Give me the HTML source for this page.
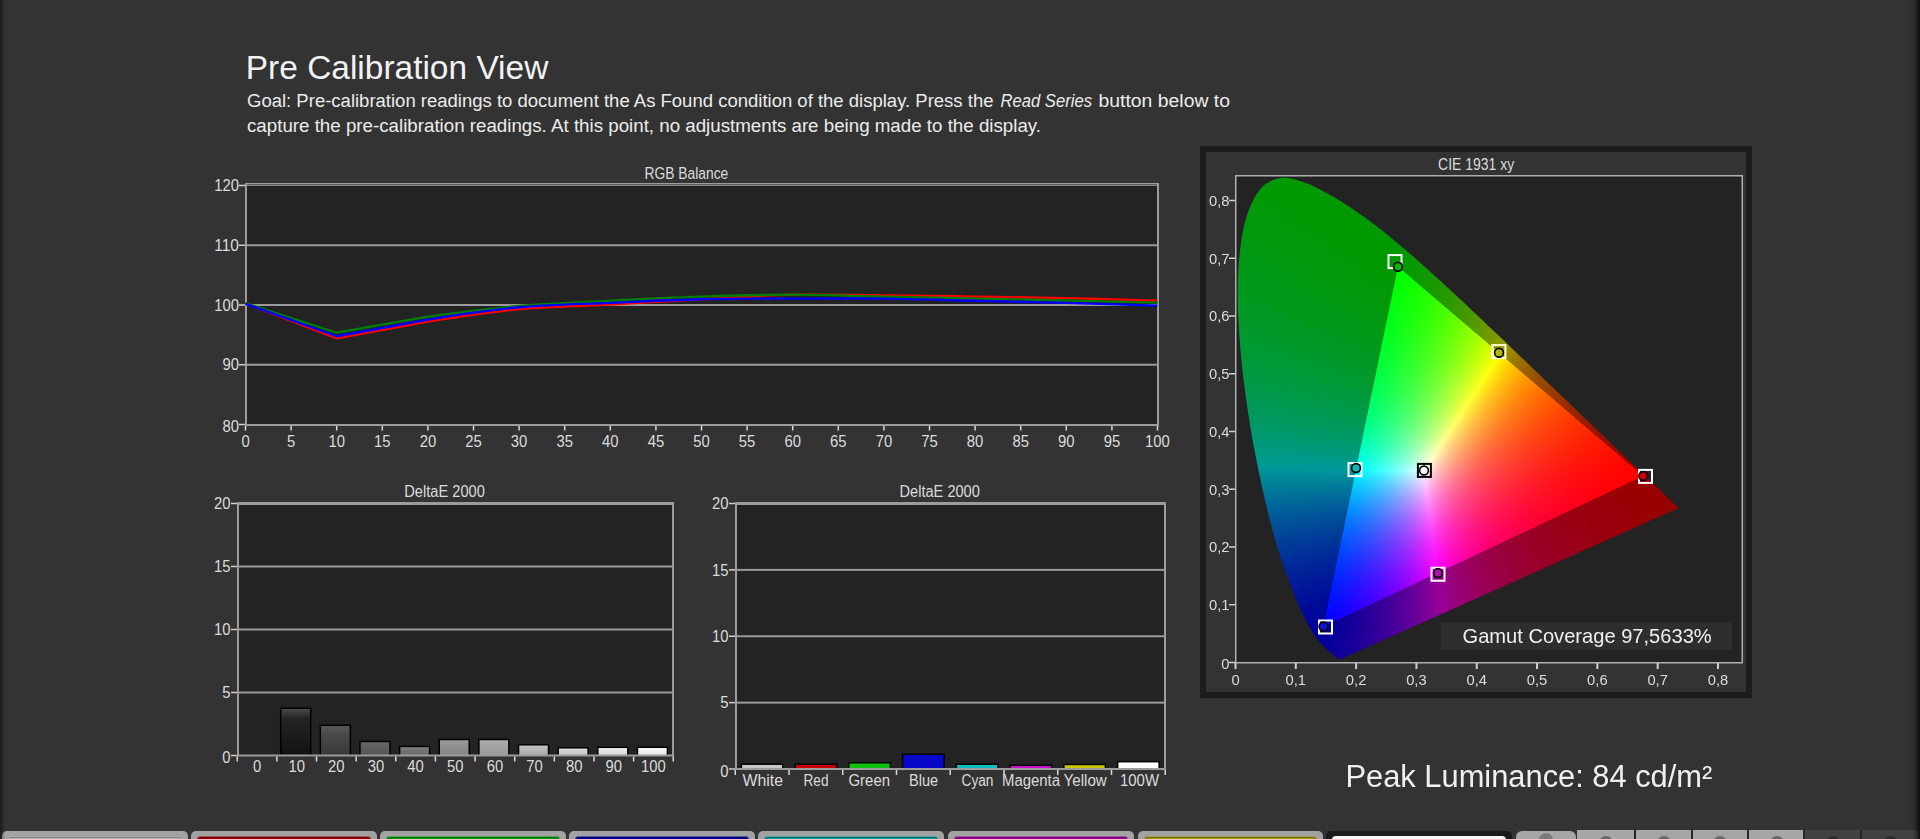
<!DOCTYPE html>
<html><head><meta charset="utf-8">
<style>
html,body{margin:0;padding:0;}
body{width:1920px;height:839px;overflow:hidden;background:#333333;position:relative;font-family:"Liberation Sans", sans-serif;}
#cie{position:absolute;left:1236px;top:176px;width:506px;height:486px;}
svg{position:absolute;left:0;top:0;}
</style></head><body>
<svg id="s" width="1920" height="839" viewBox="0 0 1920 839" font-family='"Liberation Sans", sans-serif'>
<defs>
<linearGradient id="edgeL" x1="0" x2="1" y1="0" y2="0"><stop offset="0" stop-color="#1c1c1c"/><stop offset="1" stop-color="#333333"/></linearGradient>
<linearGradient id="edgeR" x1="0" x2="1" y1="0" y2="0"><stop offset="0" stop-color="#333333"/><stop offset="0.45" stop-color="#2a2a2a"/><stop offset="1" stop-color="#0e0e0e"/></linearGradient>
</defs>
<text x="245.8" y="79" font-size="33.4" fill="#f2f2f2" textLength="302.5" lengthAdjust="spacingAndGlyphs">Pre Calibration View</text>
<text x="247" y="107.2" font-size="18.8" fill="#ececec" textLength="746.5" lengthAdjust="spacingAndGlyphs">Goal: Pre-calibration readings to document the As Found condition of the display. Press the</text>
<text x="1000.5" y="107.2" font-size="18.8" fill="#ececec" textLength="91.5" lengthAdjust="spacingAndGlyphs" font-style="italic">Read Series</text>
<text x="1098.5" y="107.2" font-size="18.8" fill="#ececec" textLength="131.5" lengthAdjust="spacingAndGlyphs">button below to</text>
<text x="247" y="132" font-size="18.8" fill="#ececec" textLength="794" lengthAdjust="spacingAndGlyphs">capture the pre-calibration readings. At this point, no adjustments are being made to the display.</text>
<rect x="245" y="183" width="914" height="243" fill="#232323"/>
<rect x="245" y="244.25" width="914" height="2" fill="#9a9a9a"/>
<rect x="245" y="304" width="914" height="2" fill="#9a9a9a"/>
<rect x="245" y="363.75" width="914" height="2" fill="#9a9a9a"/>
<rect x="245" y="183" width="914" height="3" fill="#9c9c9c"/>
<rect x="245" y="184" width="914" height="1" fill="#5c5c5c"/>
<rect x="245" y="185" width="914" height="1" fill="#8c8c8c"/>
<rect x="247" y="186" width="910" height="1" fill="#1c1c1c"/>
<rect x="245" y="424" width="914" height="2" fill="#9c9c9c"/>
<rect x="245" y="183" width="2" height="243" fill="#9c9c9c"/>
<rect x="1157" y="183" width="2" height="243" fill="#9c9c9c"/>
<rect x="239" y="184.75" width="6" height="1.5" fill="#cfcfcf"/>
<text x="214.25" y="191.15" font-size="16" fill="#dcdcdc" textLength="24.75" lengthAdjust="spacingAndGlyphs">120</text>
<rect x="239" y="244.5" width="6" height="1.5" fill="#cfcfcf"/>
<text x="214.25" y="250.9" font-size="16" fill="#dcdcdc" textLength="24.75" lengthAdjust="spacingAndGlyphs">110</text>
<rect x="239" y="304.25" width="6" height="1.5" fill="#cfcfcf"/>
<text x="214.25" y="310.65" font-size="16" fill="#dcdcdc" textLength="24.75" lengthAdjust="spacingAndGlyphs">100</text>
<rect x="239" y="364" width="6" height="1.5" fill="#cfcfcf"/>
<text x="222.5" y="370.4" font-size="16" fill="#dcdcdc" textLength="16.5" lengthAdjust="spacingAndGlyphs">90</text>
<rect x="239" y="423.75" width="6" height="1.5" fill="#cfcfcf"/>
<text x="222.5" y="432.15" font-size="16" fill="#dcdcdc" textLength="16.5" lengthAdjust="spacingAndGlyphs">80</text>
<rect x="244.75" y="426" width="1.5" height="4.5" fill="#d8d8d8"/>
<text x="241.38" y="447" font-size="16" fill="#dcdcdc" textLength="8.25" lengthAdjust="spacingAndGlyphs">0</text>
<rect x="290.35" y="426" width="1.5" height="4.5" fill="#d8d8d8"/>
<text x="286.98" y="447" font-size="16" fill="#dcdcdc" textLength="8.25" lengthAdjust="spacingAndGlyphs">5</text>
<rect x="335.95" y="426" width="1.5" height="4.5" fill="#d8d8d8"/>
<text x="328.45" y="447" font-size="16" fill="#dcdcdc" textLength="16.5" lengthAdjust="spacingAndGlyphs">10</text>
<rect x="381.55" y="426" width="1.5" height="4.5" fill="#d8d8d8"/>
<text x="374.05" y="447" font-size="16" fill="#dcdcdc" textLength="16.5" lengthAdjust="spacingAndGlyphs">15</text>
<rect x="427.15" y="426" width="1.5" height="4.5" fill="#d8d8d8"/>
<text x="419.65" y="447" font-size="16" fill="#dcdcdc" textLength="16.5" lengthAdjust="spacingAndGlyphs">20</text>
<rect x="472.75" y="426" width="1.5" height="4.5" fill="#d8d8d8"/>
<text x="465.25" y="447" font-size="16" fill="#dcdcdc" textLength="16.5" lengthAdjust="spacingAndGlyphs">25</text>
<rect x="518.35" y="426" width="1.5" height="4.5" fill="#d8d8d8"/>
<text x="510.85" y="447" font-size="16" fill="#dcdcdc" textLength="16.5" lengthAdjust="spacingAndGlyphs">30</text>
<rect x="563.95" y="426" width="1.5" height="4.5" fill="#d8d8d8"/>
<text x="556.45" y="447" font-size="16" fill="#dcdcdc" textLength="16.5" lengthAdjust="spacingAndGlyphs">35</text>
<rect x="609.55" y="426" width="1.5" height="4.5" fill="#d8d8d8"/>
<text x="602.05" y="447" font-size="16" fill="#dcdcdc" textLength="16.5" lengthAdjust="spacingAndGlyphs">40</text>
<rect x="655.15" y="426" width="1.5" height="4.5" fill="#d8d8d8"/>
<text x="647.65" y="447" font-size="16" fill="#dcdcdc" textLength="16.5" lengthAdjust="spacingAndGlyphs">45</text>
<rect x="700.75" y="426" width="1.5" height="4.5" fill="#d8d8d8"/>
<text x="693.25" y="447" font-size="16" fill="#dcdcdc" textLength="16.5" lengthAdjust="spacingAndGlyphs">50</text>
<rect x="746.35" y="426" width="1.5" height="4.5" fill="#d8d8d8"/>
<text x="738.85" y="447" font-size="16" fill="#dcdcdc" textLength="16.5" lengthAdjust="spacingAndGlyphs">55</text>
<rect x="791.95" y="426" width="1.5" height="4.5" fill="#d8d8d8"/>
<text x="784.45" y="447" font-size="16" fill="#dcdcdc" textLength="16.5" lengthAdjust="spacingAndGlyphs">60</text>
<rect x="837.55" y="426" width="1.5" height="4.5" fill="#d8d8d8"/>
<text x="830.05" y="447" font-size="16" fill="#dcdcdc" textLength="16.5" lengthAdjust="spacingAndGlyphs">65</text>
<rect x="883.15" y="426" width="1.5" height="4.5" fill="#d8d8d8"/>
<text x="875.65" y="447" font-size="16" fill="#dcdcdc" textLength="16.5" lengthAdjust="spacingAndGlyphs">70</text>
<rect x="928.75" y="426" width="1.5" height="4.5" fill="#d8d8d8"/>
<text x="921.25" y="447" font-size="16" fill="#dcdcdc" textLength="16.5" lengthAdjust="spacingAndGlyphs">75</text>
<rect x="974.35" y="426" width="1.5" height="4.5" fill="#d8d8d8"/>
<text x="966.85" y="447" font-size="16" fill="#dcdcdc" textLength="16.5" lengthAdjust="spacingAndGlyphs">80</text>
<rect x="1019.95" y="426" width="1.5" height="4.5" fill="#d8d8d8"/>
<text x="1012.45" y="447" font-size="16" fill="#dcdcdc" textLength="16.5" lengthAdjust="spacingAndGlyphs">85</text>
<rect x="1065.55" y="426" width="1.5" height="4.5" fill="#d8d8d8"/>
<text x="1058.05" y="447" font-size="16" fill="#dcdcdc" textLength="16.5" lengthAdjust="spacingAndGlyphs">90</text>
<rect x="1111.15" y="426" width="1.5" height="4.5" fill="#d8d8d8"/>
<text x="1103.65" y="447" font-size="16" fill="#dcdcdc" textLength="16.5" lengthAdjust="spacingAndGlyphs">95</text>
<rect x="1156.75" y="426" width="1.5" height="4.5" fill="#d8d8d8"/>
<text x="1145.12" y="447" font-size="16" fill="#dcdcdc" textLength="24.75" lengthAdjust="spacingAndGlyphs">100</text>
<text x="644.6" y="179" font-size="16" fill="#dcdcdc" textLength="83.7" lengthAdjust="spacingAndGlyphs">RGB Balance</text>
<g fill="none" stroke-width="2.3" stroke-linejoin="round">
<path d="M245.5,303.51 L336.7,338.46 L427.9,321.73 C458.3,316.85 488.7,312.02 519.1,309.18 C549.5,306.34 579.9,306.35 610.3,304.7 C640.7,303.05 671.1,300.93 701.5,299.26 C731.9,297.6 762.3,295.38 792.7,294.72 C823.1,294.07 853.5,295 883.9,295.32 C914.3,295.64 944.7,296.17 975.1,296.63 C1005.5,297.1 1035.9,297.46 1066.3,298.13 C1096.7,298.8 1142.3,300.22 1157.5,300.64" stroke="#ff0000"/>
<path d="M245.5,303.21 L336.7,332.72 L427.9,316.65 C458.3,312.2 488.7,308.68 519.1,306.02 C549.5,303.35 579.9,302.21 610.3,300.64 C640.7,299.06 671.1,297.56 701.5,296.58 C731.9,295.59 762.3,294.72 792.7,294.72 C823.1,294.72 853.5,295.94 883.9,296.58 C914.3,297.21 944.7,297.89 975.1,298.55 C1005.5,299.2 1035.9,299.84 1066.3,300.52 C1096.7,301.2 1142.3,302.26 1157.5,302.61" stroke="#008000"/>
<path d="M245.5,303.8 L336.7,336.25 L427.9,319.52 C458.3,314.69 488.7,310.05 519.1,307.27 C549.5,304.49 579.9,304.18 610.3,302.85 C640.7,301.51 671.1,299.96 701.5,299.26 C731.9,298.57 762.3,298.77 792.7,298.67 C823.1,298.57 853.5,298.32 883.9,298.67 C914.3,299.02 944.7,300.04 975.1,300.76 C1005.5,301.47 1035.9,302.16 1066.3,302.97 C1096.7,303.78 1142.3,305.16 1157.5,305.6" stroke="#0000ff"/>
</g>
<defs>
<linearGradient id="g10" x1="0" x2="0" y1="0" y2="1"><stop offset="0" stop-color="#4a4a4a"/><stop offset="0.2" stop-color="#242424"/><stop offset="1" stop-color="#121212"/></linearGradient>
<linearGradient id="g20" x1="0" x2="0" y1="0" y2="1"><stop offset="0" stop-color="#585858"/><stop offset="0.3" stop-color="#494949"/><stop offset="1" stop-color="#3a3a3a"/></linearGradient>
<linearGradient id="g30" x1="0" x2="0" y1="0" y2="1"><stop offset="0" stop-color="#6a6a6a"/><stop offset="0.3" stop-color="#5f5f5f"/><stop offset="1" stop-color="#555555"/></linearGradient>
<linearGradient id="g40" x1="0" x2="0" y1="0" y2="1"><stop offset="0" stop-color="#808080"/><stop offset="0.3" stop-color="#757575"/><stop offset="1" stop-color="#6a6a6a"/></linearGradient>
<linearGradient id="g50" x1="0" x2="0" y1="0" y2="1"><stop offset="0" stop-color="#9c9c9c"/><stop offset="0.3" stop-color="#919191"/><stop offset="1" stop-color="#868686"/></linearGradient>
<linearGradient id="g60" x1="0" x2="0" y1="0" y2="1"><stop offset="0" stop-color="#aeaeae"/><stop offset="0.3" stop-color="#a4a4a4"/><stop offset="1" stop-color="#9a9a9a"/></linearGradient>
<linearGradient id="g70" x1="0" x2="0" y1="0" y2="1"><stop offset="0" stop-color="#c4c4c4"/><stop offset="0.3" stop-color="#b8b8b8"/><stop offset="1" stop-color="#acacac"/></linearGradient>
<linearGradient id="g80" x1="0" x2="0" y1="0" y2="1"><stop offset="0" stop-color="#dedede"/><stop offset="0.3" stop-color="#d1d1d1"/><stop offset="1" stop-color="#c4c4c4"/></linearGradient>
<linearGradient id="g90" x1="0" x2="0" y1="0" y2="1"><stop offset="0" stop-color="#f0f0f0"/><stop offset="0.3" stop-color="#e4e4e4"/><stop offset="1" stop-color="#d8d8d8"/></linearGradient>
<linearGradient id="g100" x1="0" x2="0" y1="0" y2="1"><stop offset="0" stop-color="#ffffff"/><stop offset="0.3" stop-color="#f3f3f3"/><stop offset="1" stop-color="#e8e8e8"/></linearGradient>
</defs>
<rect x="237" y="502" width="437" height="254.5" fill="#232323"/>
<rect x="237" y="565.5" width="437" height="2" fill="#9a9a9a"/>
<rect x="237" y="628.5" width="437" height="2" fill="#9a9a9a"/>
<rect x="237" y="691.5" width="437" height="2" fill="#9a9a9a"/>
<rect x="279.95" y="707.5" width="31.5" height="48" fill="#000"/>
<rect x="281.45" y="709" width="28.5" height="46.5" fill="url(#g10)"/>
<rect x="319.59" y="724.51" width="31.5" height="30.99" fill="#000"/>
<rect x="321.09" y="726.01" width="28.5" height="29.49" fill="url(#g20)"/>
<rect x="359.23" y="740.76" width="31.5" height="14.74" fill="#000"/>
<rect x="360.73" y="742.26" width="28.5" height="13.24" fill="url(#g30)"/>
<rect x="398.86" y="745.68" width="31.5" height="9.82" fill="#000"/>
<rect x="400.36" y="747.18" width="28.5" height="8.32" fill="url(#g40)"/>
<rect x="438.5" y="738.75" width="31.5" height="16.75" fill="#000"/>
<rect x="440" y="740.25" width="28.5" height="15.25" fill="url(#g50)"/>
<rect x="478.14" y="738.75" width="31.5" height="16.75" fill="#000"/>
<rect x="479.64" y="740.25" width="28.5" height="15.25" fill="url(#g60)"/>
<rect x="517.77" y="744.04" width="31.5" height="11.46" fill="#000"/>
<rect x="519.27" y="745.54" width="28.5" height="9.96" fill="url(#g70)"/>
<rect x="557.41" y="747.06" width="31.5" height="8.44" fill="#000"/>
<rect x="558.91" y="748.56" width="28.5" height="6.94" fill="url(#g80)"/>
<rect x="597.05" y="746.56" width="31.5" height="8.94" fill="#000"/>
<rect x="598.55" y="748.06" width="28.5" height="7.44" fill="url(#g90)"/>
<rect x="636.68" y="746.56" width="31.5" height="8.94" fill="#000"/>
<rect x="638.18" y="748.06" width="28.5" height="7.44" fill="url(#g100)"/>
<rect x="237" y="502" width="437" height="3" fill="#9c9c9c"/>
<rect x="237" y="754.5" width="437" height="2" fill="#9c9c9c"/>
<rect x="237" y="502" width="2" height="254.5" fill="#9c9c9c"/>
<rect x="672" y="502" width="2" height="254.5" fill="#9c9c9c"/>
<rect x="231" y="502.75" width="6" height="1.5" fill="#cfcfcf"/>
<text x="214" y="509.15" font-size="16" fill="#dcdcdc" textLength="16.5" lengthAdjust="spacingAndGlyphs">20</text>
<rect x="231" y="565.75" width="6" height="1.5" fill="#cfcfcf"/>
<text x="214" y="572.15" font-size="16" fill="#dcdcdc" textLength="16.5" lengthAdjust="spacingAndGlyphs">15</text>
<rect x="231" y="628.75" width="6" height="1.5" fill="#cfcfcf"/>
<text x="214" y="635.15" font-size="16" fill="#dcdcdc" textLength="16.5" lengthAdjust="spacingAndGlyphs">10</text>
<rect x="231" y="691.75" width="6" height="1.5" fill="#cfcfcf"/>
<text x="222.25" y="698.15" font-size="16" fill="#dcdcdc" textLength="8.25" lengthAdjust="spacingAndGlyphs">5</text>
<rect x="231" y="754.75" width="6" height="1.5" fill="#cfcfcf"/>
<text x="222.25" y="763.15" font-size="16" fill="#dcdcdc" textLength="8.25" lengthAdjust="spacingAndGlyphs">0</text>
<rect x="236.5" y="756.5" width="1.5" height="5" fill="#d8d8d8"/>
<rect x="276.14" y="756.5" width="1.5" height="5" fill="#d8d8d8"/>
<rect x="315.77" y="756.5" width="1.5" height="5" fill="#d8d8d8"/>
<rect x="355.41" y="756.5" width="1.5" height="5" fill="#d8d8d8"/>
<rect x="395.05" y="756.5" width="1.5" height="5" fill="#d8d8d8"/>
<rect x="434.68" y="756.5" width="1.5" height="5" fill="#d8d8d8"/>
<rect x="474.32" y="756.5" width="1.5" height="5" fill="#d8d8d8"/>
<rect x="513.95" y="756.5" width="1.5" height="5" fill="#d8d8d8"/>
<rect x="553.59" y="756.5" width="1.5" height="5" fill="#d8d8d8"/>
<rect x="593.23" y="756.5" width="1.5" height="5" fill="#d8d8d8"/>
<rect x="632.86" y="756.5" width="1.5" height="5" fill="#d8d8d8"/>
<rect x="672.5" y="756.5" width="1.5" height="5" fill="#d8d8d8"/>
<text x="252.94" y="772" font-size="16" fill="#dcdcdc" textLength="8.25" lengthAdjust="spacingAndGlyphs">0</text>
<text x="288.45" y="772" font-size="16" fill="#dcdcdc" textLength="16.5" lengthAdjust="spacingAndGlyphs">10</text>
<text x="328.09" y="772" font-size="16" fill="#dcdcdc" textLength="16.5" lengthAdjust="spacingAndGlyphs">20</text>
<text x="367.73" y="772" font-size="16" fill="#dcdcdc" textLength="16.5" lengthAdjust="spacingAndGlyphs">30</text>
<text x="407.36" y="772" font-size="16" fill="#dcdcdc" textLength="16.5" lengthAdjust="spacingAndGlyphs">40</text>
<text x="447" y="772" font-size="16" fill="#dcdcdc" textLength="16.5" lengthAdjust="spacingAndGlyphs">50</text>
<text x="486.64" y="772" font-size="16" fill="#dcdcdc" textLength="16.5" lengthAdjust="spacingAndGlyphs">60</text>
<text x="526.27" y="772" font-size="16" fill="#dcdcdc" textLength="16.5" lengthAdjust="spacingAndGlyphs">70</text>
<text x="565.91" y="772" font-size="16" fill="#dcdcdc" textLength="16.5" lengthAdjust="spacingAndGlyphs">80</text>
<text x="605.55" y="772" font-size="16" fill="#dcdcdc" textLength="16.5" lengthAdjust="spacingAndGlyphs">90</text>
<text x="641.06" y="772" font-size="16" fill="#dcdcdc" textLength="24.75" lengthAdjust="spacingAndGlyphs">100</text>
<text x="404.3" y="497" font-size="16" fill="#dcdcdc" textLength="80.5" lengthAdjust="spacingAndGlyphs">DeltaE 2000</text>
<rect x="735" y="502" width="431" height="268" fill="#232323"/>
<rect x="735" y="568.88" width="431" height="2" fill="#9a9a9a"/>
<rect x="735" y="635.25" width="431" height="2" fill="#9a9a9a"/>
<rect x="735" y="701.62" width="431" height="2" fill="#9a9a9a"/>
<rect x="740.62" y="763.46" width="43" height="5.54" fill="#000"/>
<rect x="742.12" y="764.96" width="40" height="4.04" fill="#c8c8c8"/>
<rect x="794.38" y="763.46" width="43" height="5.54" fill="#000"/>
<rect x="795.88" y="764.96" width="40" height="4.04" fill="#c80000"/>
<rect x="848.12" y="762" width="43" height="7" fill="#000"/>
<rect x="849.62" y="763.5" width="40" height="5.5" fill="#10c010"/>
<rect x="901.88" y="753.5" width="43" height="15.5" fill="#000"/>
<rect x="903.38" y="755" width="40" height="14" fill="#0808c8"/>
<rect x="955.62" y="763.46" width="43" height="5.54" fill="#000"/>
<rect x="957.12" y="764.96" width="40" height="4.04" fill="#10c0c0"/>
<rect x="1009.38" y="764.52" width="43" height="4.48" fill="#000"/>
<rect x="1010.88" y="766.02" width="40" height="2.98" fill="#d010d0"/>
<rect x="1063.12" y="763.72" width="43" height="5.28" fill="#000"/>
<rect x="1064.62" y="765.22" width="40" height="3.78" fill="#c8c800"/>
<rect x="1116.88" y="760.93" width="43" height="8.07" fill="#000"/>
<rect x="1118.38" y="762.43" width="40" height="6.57" fill="#ffffff"/>
<rect x="735" y="502" width="431" height="3" fill="#9c9c9c"/>
<rect x="735" y="768" width="431" height="2" fill="#9c9c9c"/>
<rect x="735" y="502" width="2" height="268" fill="#9c9c9c"/>
<rect x="1164" y="502" width="2" height="268" fill="#9c9c9c"/>
<rect x="729" y="502.75" width="6" height="1.5" fill="#cfcfcf"/>
<text x="712" y="509.15" font-size="16" fill="#dcdcdc" textLength="16.5" lengthAdjust="spacingAndGlyphs">20</text>
<rect x="729" y="569.12" width="6" height="1.5" fill="#cfcfcf"/>
<text x="712" y="575.52" font-size="16" fill="#dcdcdc" textLength="16.5" lengthAdjust="spacingAndGlyphs">15</text>
<rect x="729" y="635.5" width="6" height="1.5" fill="#cfcfcf"/>
<text x="712" y="641.9" font-size="16" fill="#dcdcdc" textLength="16.5" lengthAdjust="spacingAndGlyphs">10</text>
<rect x="729" y="701.88" width="6" height="1.5" fill="#cfcfcf"/>
<text x="720.25" y="708.27" font-size="16" fill="#dcdcdc" textLength="8.25" lengthAdjust="spacingAndGlyphs">5</text>
<rect x="729" y="768.25" width="6" height="1.5" fill="#cfcfcf"/>
<text x="720.25" y="776.65" font-size="16" fill="#dcdcdc" textLength="8.25" lengthAdjust="spacingAndGlyphs">0</text>
<rect x="734.5" y="770" width="1.5" height="5" fill="#d8d8d8"/>
<rect x="788.25" y="770" width="1.5" height="5" fill="#d8d8d8"/>
<rect x="842" y="770" width="1.5" height="5" fill="#d8d8d8"/>
<rect x="895.75" y="770" width="1.5" height="5" fill="#d8d8d8"/>
<rect x="949.5" y="770" width="1.5" height="5" fill="#d8d8d8"/>
<rect x="1003.25" y="770" width="1.5" height="5" fill="#d8d8d8"/>
<rect x="1057" y="770" width="1.5" height="5" fill="#d8d8d8"/>
<rect x="1110.75" y="770" width="1.5" height="5" fill="#d8d8d8"/>
<rect x="1164.5" y="770" width="1.5" height="5" fill="#d8d8d8"/>
<text x="742.5" y="786" font-size="16" fill="#dcdcdc" textLength="40.5" lengthAdjust="spacingAndGlyphs">White</text>
<text x="803.5" y="786" font-size="16" fill="#dcdcdc" textLength="25" lengthAdjust="spacingAndGlyphs">Red</text>
<text x="848.5" y="786" font-size="16" fill="#dcdcdc" textLength="41.5" lengthAdjust="spacingAndGlyphs">Green</text>
<text x="909" y="786" font-size="16" fill="#dcdcdc" textLength="29" lengthAdjust="spacingAndGlyphs">Blue</text>
<text x="961.5" y="786" font-size="16" fill="#dcdcdc" textLength="32" lengthAdjust="spacingAndGlyphs">Cyan</text>
<text x="1002" y="786" font-size="16" fill="#dcdcdc" textLength="58" lengthAdjust="spacingAndGlyphs">Magenta</text>
<text x="1063.6" y="786" font-size="16" fill="#dcdcdc" textLength="43.2" lengthAdjust="spacingAndGlyphs">Yellow</text>
<text x="1120" y="786" font-size="16" fill="#dcdcdc" textLength="39" lengthAdjust="spacingAndGlyphs">100W</text>
<text x="899.6" y="497" font-size="16" fill="#dcdcdc" textLength="80.2" lengthAdjust="spacingAndGlyphs">DeltaE 2000</text>
<rect x="1200" y="146" width="552" height="552" fill="#1c1c1c"/>
<rect x="1206" y="152" width="540" height="540" fill="#333333"/>
<defs><linearGradient id="hs" x1="0" y1="0" x2="0" y2="1"><stop offset="0" stop-color="#009900"/><stop offset="0.45" stop-color="#00924a"/><stop offset="0.62" stop-color="#00808a"/><stop offset="0.82" stop-color="#0030a0"/><stop offset="1" stop-color="#1800a0"/></linearGradient><linearGradient id="hs2" x1="0" y1="0" x2="1" y2="0"><stop offset="0.2" stop-color="#900090" stop-opacity="0"/><stop offset="0.45" stop-color="#900090" stop-opacity="0.6"/><stop offset="1" stop-color="#990000"/></linearGradient><radialGradient id="tw" cx="1424" cy="470" r="70" gradientUnits="userSpaceOnUse"><stop offset="0" stop-color="#ffffff"/><stop offset="1" stop-color="#ffffff" stop-opacity="0"/></radialGradient></defs>
<rect x="1236" y="176" width="506" height="486" fill="#232323"/>
<path d="M1340.5,659.2 L1340.44,659.2 L1340.32,659.26 L1340.2,659.26 L1340.02,659.31 L1339.84,659.31 L1339.6,659.31 L1339.29,659.31 L1338.87,659.14 L1338.21,658.73 L1337.36,658.09 L1336.16,657.11 L1334.65,655.77 L1332.66,654.09 L1329.95,651.83 L1326.57,648.92 L1322.35,644.86 L1317.22,638.94 L1310.34,628.55 L1301.6,611.71 L1290.56,585.07 L1276.93,545.59 L1262.88,490.85 L1249.67,422.53 L1240.45,349.56 L1237.85,281.99 L1243.88,226.61 L1258.96,190.73 L1280.31,178.08 L1304.37,182.49 L1328.8,194.28 L1351.84,208.38 L1373.97,224.23 L1395.8,241.64 L1417.39,260.22 L1438.93,279.61 L1460.52,299.58 L1481.99,319.84 L1503.34,340.1 L1524.26,360.12 L1544.59,379.63 L1564.07,398.32 L1582.4,415.85 L1599.11,431.93 L1613.64,445.86 L1626.43,458.11 L1637.04,468.21 L1645.67,476.51 L1652.54,483.13 L1658.03,488.36 L1662.43,492.59 L1666.11,496.14 L1669.13,499.04 L1671.54,501.3 L1673.35,503.04 L1674.74,504.38 L1675.76,505.37 L1676.43,506 L1676.97,506.53 L1677.39,506.93 L1677.81,507.34 L1678.18,507.69 L1678.42,507.92 L1678.54,508.04 L1678.6,508.09 Z" fill="url(#hs)"/>
<path d="M1340,659 L1678.6,508.1 L1500,580 L1323.5,626.5 Z" fill="url(#hs2)"/>
<path d="M1323.5,626.5 L1643.25,476 L1678.6,508.1 L1340,659 Z" fill="url(#hs2)"/>
<defs><linearGradient id="ob" gradientUnits="userSpaceOnUse" x1="1398" y1="266" x2="1650" y2="480"><stop offset="0" stop-color="#009a00"/><stop offset="0.45" stop-color="#7a8a00"/><stop offset="1" stop-color="#9a1000"/></linearGradient></defs>
<path d="M1398,266.75 L1395.8,241.64 L1417.39,260.22 L1438.93,279.61 L1460.52,299.58 L1481.99,319.84 L1503.34,340.1 L1524.26,360.12 L1544.59,379.63 L1564.07,398.32 L1582.4,415.85 L1599.11,431.93 L1613.64,445.86 L1626.43,458.11 L1637.04,468.21 L1645.67,476.51 L1643.25,476 Z" fill="url(#ob)"/>
<defs><linearGradient id="ts0" gradientUnits="userSpaceOnUse" x1="1643.25" y1="476" x2="1499" y2="352.75"><stop offset="0" stop-color="#ff0000"/><stop offset="1" stop-color="#ffff00"/></linearGradient></defs>
<path d="M1424,470.5 L1643.25,476 L1499,352.75 Z" fill="url(#ts0)" stroke="url(#ts0)" stroke-width="0.6"/>
<defs><linearGradient id="ts1" gradientUnits="userSpaceOnUse" x1="1499" y1="352.75" x2="1398" y2="266.75"><stop offset="0" stop-color="#ffff00"/><stop offset="1" stop-color="#00ff00"/></linearGradient></defs>
<path d="M1424,470.5 L1499,352.75 L1398,266.75 Z" fill="url(#ts1)" stroke="url(#ts1)" stroke-width="0.6"/>
<defs><linearGradient id="ts2" gradientUnits="userSpaceOnUse" x1="1398" y1="266.75" x2="1356" y2="468"><stop offset="0" stop-color="#00ff00"/><stop offset="1" stop-color="#00ffff"/></linearGradient></defs>
<path d="M1424,470.5 L1398,266.75 L1356,468 Z" fill="url(#ts2)" stroke="url(#ts2)" stroke-width="0.6"/>
<defs><linearGradient id="ts3" gradientUnits="userSpaceOnUse" x1="1356" y1="468" x2="1323.5" y2="626.5"><stop offset="0" stop-color="#00ffff"/><stop offset="1" stop-color="#0000ff"/></linearGradient></defs>
<path d="M1424,470.5 L1356,468 L1323.5,626.5 Z" fill="url(#ts3)" stroke="url(#ts3)" stroke-width="0.6"/>
<defs><linearGradient id="ts4" gradientUnits="userSpaceOnUse" x1="1323.5" y1="626.5" x2="1438" y2="573"><stop offset="0" stop-color="#0000ff"/><stop offset="1" stop-color="#ff00ff"/></linearGradient></defs>
<path d="M1424,470.5 L1323.5,626.5 L1438,573 Z" fill="url(#ts4)" stroke="url(#ts4)" stroke-width="0.6"/>
<defs><linearGradient id="ts5" gradientUnits="userSpaceOnUse" x1="1438" y1="573" x2="1643.25" y2="476"><stop offset="0" stop-color="#ff00ff"/><stop offset="1" stop-color="#ff0000"/></linearGradient></defs>
<path d="M1424,470.5 L1438,573 L1643.25,476 Z" fill="url(#ts5)" stroke="url(#ts5)" stroke-width="0.6"/>
<path d="M1643.25,476 L1398,266.75 L1323.5,626.5 Z" fill="url(#tw)"/>
<text x="1438.1" y="169.8" font-size="16" fill="#dcdcdc" textLength="76.1" lengthAdjust="spacingAndGlyphs">CIE 1931 xy</text>
</svg>
<canvas id="cie" width="506" height="486"></canvas>
<svg id="t" width="1920" height="839" viewBox="0 0 1920 839" font-family='"Liberation Sans", sans-serif'>
<rect x="1235" y="175" width="508" height="1.5" fill="#b0b0b0"/>
<rect x="1235" y="662" width="508" height="1.5" fill="#b0b0b0"/>
<rect x="1235" y="175" width="1.5" height="488" fill="#b0b0b0"/>
<rect x="1741.5" y="175" width="1.5" height="488" fill="#b0b0b0"/>
<rect x="1229" y="661.75" width="6" height="1.5" fill="#cfcfcf"/>
<text x="1221.25" y="668.8" font-size="15.5" fill="#dcdcdc" textLength="8.25" lengthAdjust="spacingAndGlyphs">0</text>
<rect x="1229" y="604" width="6" height="1.5" fill="#cfcfcf"/>
<text x="1209" y="610.05" font-size="15.5" fill="#dcdcdc" textLength="20.5" lengthAdjust="spacingAndGlyphs">0,1</text>
<rect x="1229" y="546.25" width="6" height="1.5" fill="#cfcfcf"/>
<text x="1209" y="552.3" font-size="15.5" fill="#dcdcdc" textLength="20.5" lengthAdjust="spacingAndGlyphs">0,2</text>
<rect x="1229" y="488.5" width="6" height="1.5" fill="#cfcfcf"/>
<text x="1209" y="494.55" font-size="15.5" fill="#dcdcdc" textLength="20.5" lengthAdjust="spacingAndGlyphs">0,3</text>
<rect x="1229" y="430.75" width="6" height="1.5" fill="#cfcfcf"/>
<text x="1209" y="436.8" font-size="15.5" fill="#dcdcdc" textLength="20.5" lengthAdjust="spacingAndGlyphs">0,4</text>
<rect x="1229" y="373" width="6" height="1.5" fill="#cfcfcf"/>
<text x="1209" y="379.05" font-size="15.5" fill="#dcdcdc" textLength="20.5" lengthAdjust="spacingAndGlyphs">0,5</text>
<rect x="1229" y="315.25" width="6" height="1.5" fill="#cfcfcf"/>
<text x="1209" y="321.3" font-size="15.5" fill="#dcdcdc" textLength="20.5" lengthAdjust="spacingAndGlyphs">0,6</text>
<rect x="1229" y="257.5" width="6" height="1.5" fill="#cfcfcf"/>
<text x="1209" y="263.55" font-size="15.5" fill="#dcdcdc" textLength="20.5" lengthAdjust="spacingAndGlyphs">0,7</text>
<rect x="1229" y="199.75" width="6" height="1.5" fill="#cfcfcf"/>
<text x="1209" y="205.8" font-size="15.5" fill="#dcdcdc" textLength="20.5" lengthAdjust="spacingAndGlyphs">0,8</text>
<rect x="1234.5" y="663" width="2" height="6" fill="#cfcfcf"/>
<text x="1231.38" y="685" font-size="15.5" fill="#dcdcdc" textLength="8.25" lengthAdjust="spacingAndGlyphs">0</text>
<rect x="1294.81" y="663" width="2" height="6" fill="#cfcfcf"/>
<text x="1285.56" y="685" font-size="15.5" fill="#dcdcdc" textLength="20.5" lengthAdjust="spacingAndGlyphs">0,1</text>
<rect x="1355.12" y="663" width="2" height="6" fill="#cfcfcf"/>
<text x="1345.87" y="685" font-size="15.5" fill="#dcdcdc" textLength="20.5" lengthAdjust="spacingAndGlyphs">0,2</text>
<rect x="1415.43" y="663" width="2" height="6" fill="#cfcfcf"/>
<text x="1406.18" y="685" font-size="15.5" fill="#dcdcdc" textLength="20.5" lengthAdjust="spacingAndGlyphs">0,3</text>
<rect x="1475.74" y="663" width="2" height="6" fill="#cfcfcf"/>
<text x="1466.49" y="685" font-size="15.5" fill="#dcdcdc" textLength="20.5" lengthAdjust="spacingAndGlyphs">0,4</text>
<rect x="1536.05" y="663" width="2" height="6" fill="#cfcfcf"/>
<text x="1526.8" y="685" font-size="15.5" fill="#dcdcdc" textLength="20.5" lengthAdjust="spacingAndGlyphs">0,5</text>
<rect x="1596.36" y="663" width="2" height="6" fill="#cfcfcf"/>
<text x="1587.11" y="685" font-size="15.5" fill="#dcdcdc" textLength="20.5" lengthAdjust="spacingAndGlyphs">0,6</text>
<rect x="1656.67" y="663" width="2" height="6" fill="#cfcfcf"/>
<text x="1647.42" y="685" font-size="15.5" fill="#dcdcdc" textLength="20.5" lengthAdjust="spacingAndGlyphs">0,7</text>
<rect x="1716.98" y="663" width="2" height="6" fill="#cfcfcf"/>
<text x="1707.73" y="685" font-size="15.5" fill="#dcdcdc" textLength="20.5" lengthAdjust="spacingAndGlyphs">0,8</text>
<rect x="1441" y="622.5" width="291" height="27.5" fill="#2e2e2e"/>
<text x="1462.5" y="643.3" font-size="20.3" fill="#f0f0f0" textLength="249.2" lengthAdjust="spacingAndGlyphs">Gamut Coverage 97,5633%</text>
<rect x="1388.5" y="255.1" width="13" height="13" fill="none" stroke="#ffffff" stroke-width="2"/>
<circle cx="1398" cy="266.75" r="4.4" fill="#10b010" stroke="#000" stroke-width="1.6"/>
<rect x="1492.4" y="345.1" width="13" height="13" fill="none" stroke="#ffffe0" stroke-width="2"/>
<circle cx="1499" cy="352.75" r="4.4" fill="#b8b800" stroke="#000" stroke-width="1.6"/>
<rect x="1348.5" y="463.1" width="13" height="13" fill="none" stroke="#ffffff" stroke-width="2"/>
<circle cx="1356" cy="468" r="4.4" fill="#10b8b8" stroke="#000" stroke-width="1.6"/>
<rect x="1417.9" y="463.9" width="13" height="13" fill="none" stroke="#000000" stroke-width="2"/>
<circle cx="1424" cy="470.5" r="4.4" fill="#ffffff" stroke="#000" stroke-width="1.6"/>
<rect x="1639" y="469.9" width="13" height="13" fill="none" stroke="#ffffff" stroke-width="2"/>
<circle cx="1643.25" cy="476" r="4.4" fill="#d00000" stroke="#000" stroke-width="1.6"/>
<rect x="1431.5" y="567.75" width="13" height="13" fill="none" stroke="#ffffff" stroke-width="2"/>
<circle cx="1438" cy="573" r="4.4" fill="#b010b0" stroke="#000" stroke-width="1.6"/>
<rect x="1319" y="620.5" width="13" height="13" fill="none" stroke="#ffffff" stroke-width="2"/>
<circle cx="1323.5" cy="626.5" r="4.4" fill="#1010d0" stroke="#000" stroke-width="1.6"/>
<text x="1345.5" y="787" font-size="31" fill="#f0f0f0" textLength="366.8" lengthAdjust="spacingAndGlyphs">Peak Luminance: 84 cd/m²</text>
</svg>
<div style="position:absolute;left:2px;top:830.5px;width:185.5px;height:12px;background:#a2a2a2;border-radius:5px 5px 0 0;"></div>
<div style="position:absolute;left:8px;top:836px;width:173.5px;height:8px;background:#b8b8b8;border-radius:4px 4px 0 0;box-shadow:inset 0 1px 0 rgba(255,255,255,0.35), inset 0 2px 0 rgba(0,0,0,0.3);"></div>
<div style="position:absolute;left:190.6px;top:830.5px;width:186.4px;height:12px;background:#a2a2a2;border-radius:5px 5px 0 0;"></div>
<div style="position:absolute;left:196.6px;top:836px;width:174.4px;height:8px;background:#a00000;border-radius:4px 4px 0 0;box-shadow:inset 0 1px 0 rgba(255,255,255,0.35), inset 0 2px 0 rgba(0,0,0,0.3);"></div>
<div style="position:absolute;left:380px;top:830.5px;width:186px;height:12px;background:#a2a2a2;border-radius:5px 5px 0 0;"></div>
<div style="position:absolute;left:386px;top:836px;width:174px;height:8px;background:#00a000;border-radius:4px 4px 0 0;box-shadow:inset 0 1px 0 rgba(255,255,255,0.35), inset 0 2px 0 rgba(0,0,0,0.3);"></div>
<div style="position:absolute;left:569px;top:830.5px;width:186px;height:12px;background:#a2a2a2;border-radius:5px 5px 0 0;"></div>
<div style="position:absolute;left:575px;top:836px;width:174px;height:8px;background:#0000a0;border-radius:4px 4px 0 0;box-shadow:inset 0 1px 0 rgba(255,255,255,0.35), inset 0 2px 0 rgba(0,0,0,0.3);"></div>
<div style="position:absolute;left:758px;top:830.5px;width:186px;height:12px;background:#a2a2a2;border-radius:5px 5px 0 0;"></div>
<div style="position:absolute;left:764px;top:836px;width:174px;height:8px;background:#00a0a0;border-radius:4px 4px 0 0;box-shadow:inset 0 1px 0 rgba(255,255,255,0.35), inset 0 2px 0 rgba(0,0,0,0.3);"></div>
<div style="position:absolute;left:947.7px;top:830.5px;width:186.3px;height:12px;background:#a2a2a2;border-radius:5px 5px 0 0;"></div>
<div style="position:absolute;left:953.7px;top:836px;width:174.3px;height:8px;background:#a000a0;border-radius:4px 4px 0 0;box-shadow:inset 0 1px 0 rgba(255,255,255,0.35), inset 0 2px 0 rgba(0,0,0,0.3);"></div>
<div style="position:absolute;left:1138px;top:830.5px;width:185px;height:12px;background:#a2a2a2;border-radius:5px 5px 0 0;"></div>
<div style="position:absolute;left:1144px;top:836px;width:173px;height:8px;background:#a0a000;border-radius:4px 4px 0 0;box-shadow:inset 0 1px 0 rgba(255,255,255,0.35), inset 0 2px 0 rgba(0,0,0,0.3);"></div>
<div style="position:absolute;left:1325.5px;top:830.5px;width:186px;height:12px;background:#1a1a1a;border-radius:5px 5px 0 0;"></div>
<div style="position:absolute;left:1331.5px;top:836px;width:174px;height:8px;background:#f4f4f4;border-radius:4px 4px 0 0;"></div>
<div style="position:absolute;left:1577px;top:830px;width:338px;height:12px;background:#262626;"></div>
<div style="position:absolute;left:1516px;top:830.5px;width:60px;height:12px;background:linear-gradient(#a6a6a6,#a6a6a6);border-radius:6px 6px 0 0;"></div>
<div style="position:absolute;left:1539px;top:833px;width:14px;height:14px;border-radius:50%;background:#7a7a7a;"></div>
<div style="position:absolute;left:1577px;top:830px;width:57px;height:12px;background:linear-gradient(#a6a6a6,#a6a6a6);border-radius:0;"></div>
<div style="position:absolute;left:1599px;top:836px;width:14px;height:14px;border-radius:50%;background:#686868;"></div>
<div style="position:absolute;left:1636px;top:830px;width:54.5px;height:12px;background:linear-gradient(#a6a6a6,#a6a6a6);border-radius:0;"></div>
<div style="position:absolute;left:1656.75px;top:836px;width:14px;height:14px;border-radius:50%;background:#686868;"></div>
<div style="position:absolute;left:1692.5px;top:830px;width:54.5px;height:12px;background:linear-gradient(#a6a6a6,#a6a6a6);border-radius:0;"></div>
<div style="position:absolute;left:1713.25px;top:836px;width:14px;height:14px;border-radius:50%;background:#686868;"></div>
<div style="position:absolute;left:1749px;top:830px;width:54px;height:12px;background:linear-gradient(#a6a6a6,#a6a6a6);border-radius:0;"></div>
<div style="position:absolute;left:1769.5px;top:836px;width:14px;height:14px;border-radius:50%;background:#686868;"></div>
<div style="position:absolute;left:1805px;top:830px;width:55px;height:12px;background:linear-gradient(#424242,#424242);border-radius:0;"></div>
<div style="position:absolute;left:1826px;top:836px;width:14px;height:14px;border-radius:50%;background:#2c2c2c;"></div>
<div style="position:absolute;left:1862px;top:830px;width:57px;height:12px;background:linear-gradient(#424242,#424242);border-radius:0;"></div>
<div style="position:absolute;left:1884px;top:836px;width:14px;height:14px;border-radius:50%;background:#2c2c2c;"></div>
<div style="position:absolute;left:0;top:0;width:5px;height:839px;background:linear-gradient(90deg,rgba(0,0,0,0.45),rgba(0,0,0,0));"></div>
<div style="position:absolute;left:1911px;top:0;width:9px;height:839px;background:linear-gradient(90deg,rgba(0,0,0,0),rgba(0,0,0,0.18) 45%,rgba(0,0,0,0.72));"></div>

<script>
(function(){
var cv=document.getElementById('cie');
var W=506,H=486;
cv.width=W;cv.height=H;
var ctx=cv.getContext('2d');
var img=ctx.createImageData(W,H);
var d=img.data;
// mapping
var X0=1235.5-1236, SX=603.1, Y0=662.1-176, SY=580.5;
var locus=[[0.1741,0.0050],[0.1740,0.0050],[0.1738,0.0049],[0.1736,0.0049],[0.1733,0.0048],[0.1730,0.0048],[0.1726,0.0048],[0.1721,0.0048],[0.1714,0.0051],[0.1703,0.0058],[0.1689,0.0069],[0.1669,0.0086],[0.1644,0.0109],[0.1611,0.0138],[0.1566,0.0177],[0.1510,0.0227],[0.1440,0.0297],[0.1355,0.0399],[0.1241,0.0578],[0.1096,0.0868],[0.0913,0.1327],[0.0687,0.2007],[0.0454,0.2950],[0.0235,0.4127],[0.0082,0.5384],[0.0039,0.6548],[0.0139,0.7502],[0.0389,0.8120],[0.0743,0.8338],[0.1142,0.8262],[0.1547,0.8059],[0.1929,0.7816],[0.2296,0.7543],[0.2658,0.7243],[0.3016,0.6923],[0.3373,0.6589],[0.3731,0.6245],[0.4087,0.5896],[0.4441,0.5547],[0.4788,0.5202],[0.5125,0.4866],[0.5448,0.4544],[0.5752,0.4242],[0.6029,0.3965],[0.6270,0.3725],[0.6482,0.3514],[0.6658,0.3340],[0.6801,0.3197],[0.6915,0.3083],[0.7006,0.2993],[0.7079,0.2920],[0.7140,0.2859],[0.7190,0.2809],[0.7230,0.2770],[0.7260,0.2740],[0.7283,0.2717],[0.7300,0.2700],[0.7311,0.2689],[0.7320,0.2680],[0.7327,0.2673],[0.7334,0.2666],[0.7340,0.2660],[0.7344,0.2656],[0.7346,0.2654],[0.7347,0.2653]];
var pts=locus.map(function(p){return [X0+SX*p[0], Y0-SY*p[1]];});
// catmull-rom densify
var poly=[];
for(var i=0;i<pts.length-1;i++){
  var p0=pts[Math.max(i-1,0)],p1=pts[i],p2=pts[i+1],p3=pts[Math.min(i+2,pts.length-1)];
  for(var t=0;t<8;t++){
    var s=t/8,s2=s*s,s3=s2*s;
    var xx=0.5*((2*p1[0])+(-p0[0]+p2[0])*s+(2*p0[0]-5*p1[0]+4*p2[0]-p3[0])*s2+(-p0[0]+3*p1[0]-3*p2[0]+p3[0])*s3);
    var yy=0.5*((2*p1[1])+(-p0[1]+p2[1])*s+(2*p0[1]-5*p1[1]+4*p2[1]-p3[1])*s2+(-p0[1]+3*p1[1]-3*p2[1]+p3[1])*s3);
    poly.push([xx,yy]);
  }
}
poly.push(pts[pts.length-1]);
function maskOf(path){
  var c=document.createElement('canvas');c.width=W;c.height=H;
  var x=c.getContext('2d');x.fillStyle='#fff';x.beginPath();
  x.moveTo(path[0][0],path[0][1]);
  for(var i=1;i<path.length;i++)x.lineTo(path[i][0],path[i][1]);
  x.closePath();x.fill();
  return x.getImageData(0,0,W,H).data;
}
// measured primaries in px (canvas coords)
var R=[1643.25-1236,476-176], G=[1398-1236,266.75-176], B=[1323.5-1236,626.5-176];
var mH=maskOf(poly), mT=maskOf([R,G,B]);
function toxy(p){return [(p[0]-X0)/SX,(Y0-p[1])/SY];}
var r=toxy(R), g=toxy(G), b=toxy(B), w=[0.3127,0.3290];
function col(p){return [p[0]/p[1],1,(1-p[0]-p[1])/p[1]];}
var cr=col(r),cg=col(g),cb=col(b),cw=col(w);
function inv3(m){
  var a=m[0][0],b_=m[0][1],c=m[0][2],d_=m[1][0],e=m[1][1],f=m[1][2],g_=m[2][0],h=m[2][1],i=m[2][2];
  var A=e*i-f*h,B_=-(d_*i-f*g_),C=d_*h-e*g_;
  var det=a*A+b_*B_+c*C;
  return [[A/det,-(b_*i-c*h)/det,(b_*f-c*e)/det],[B_/det,(a*i-c*g_)/det,-(a*f-c*d_)/det],[C/det,-(a*h-b_*g_)/det,(a*e-b_*d_)/det]];
}
function mul(m,v){return [m[0][0]*v[0]+m[0][1]*v[1]+m[0][2]*v[2],m[1][0]*v[0]+m[1][1]*v[1]+m[1][2]*v[2],m[2][0]*v[0]+m[2][1]*v[1]+m[2][2]*v[2]];}
var P=[[cr[0],cg[0],cb[0]],[cr[1],cg[1],cb[1]],[cr[2],cg[2],cb[2]]];
var S=mul(inv3(P),cw);
var M=[[cr[0]*S[0],cg[0]*S[1],cb[0]*S[2]],[cr[1]*S[0],cg[1]*S[1],cb[1]*S[2]],[cr[2]*S[0],cg[2]*S[1],cb[2]*S[2]]];
var Mi=inv3(M);
var GAM=window.CIEGAMMA||0.85, DIM=window.CIEDIM||0.6, BG=0x23;
for(var y=0;y<H;y++){
  for(var x=0;x<W;x++){
    var k=(y*W+x)*4;
    var aH=mH[k+3]/255, aT=mT[k+3]/255;
    var rr=BG,gg=BG,bb=BG;
    if(aH>0||aT>0){
      var px=x+0.5,py=y+0.5;
      var cx=(px-X0)/SX, cy=(Y0-py)/SY;
      if(cy<0.002)cy=0.002;
      var c=mul(Mi,[cx/cy,1,(1-cx-cy)/cy]);
      var c0=Math.max(c[0],0),c1=Math.max(c[1],0),c2=Math.max(c[2],0);
      var mx=Math.max(c0,c1,c2)||1;
      c0/=mx;c1/=mx;c2/=mx;
      if(GAM!==1){c0=Math.pow(c0,1/GAM);c1=Math.pow(c1,1/GAM);c2=Math.pow(c2,1/GAM);}
      c0*=255;c1*=255;c2*=255;
      rr=rr+(c0*DIM-rr)*aH; gg=gg+(c1*DIM-gg)*aH; bb=bb+(c2*DIM-bb)*aH;
      rr=rr+(c0-rr)*aT; gg=gg+(c1-gg)*aT; bb=bb+(c2-bb)*aT;
    }
    d[k]=rr;d[k+1]=gg;d[k+2]=bb;d[k+3]=255;
  }
}
ctx.putImageData(img,0,0);
})();
</script>
</body></html>
